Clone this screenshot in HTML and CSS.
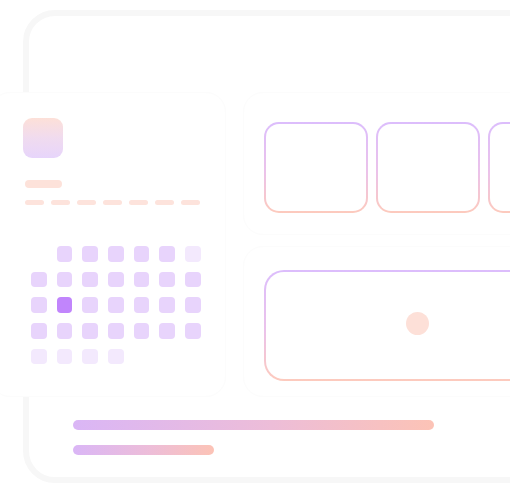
FILE: index.html
```html
<!DOCTYPE html>
<html>
<head>
<meta charset="utf-8">
<link rel="stylesheet" href="styles.css">
</head>
<body>
<div class="stage">
  <div class="back">
    <div class="bars">
      <div class="bar bar-long"></div>
      <div class="bar bar-short"></div>
    </div>
  </div>
  <div class="front">
    <div class="panel left">
      <div class="avatar"></div>
      <div class="pill"></div>
      <div class="dashes">
        <span></span><span></span><span></span><span></span><span></span><span></span><span></span>
      </div>
      <div class="grid">
        <i class="empty"></i><i></i><i></i><i></i><i></i><i></i><i class="faint"></i>
        <i></i><i></i><i></i><i></i><i></i><i></i><i></i>
        <i></i><i class="active"></i><i></i><i></i><i></i><i></i><i></i>
        <i></i><i></i><i></i><i></i><i></i><i></i><i></i>
        <i class="faint"></i><i class="faint"></i><i class="faint"></i><i class="faint"></i>
      </div>
    </div>
    <div class="right">
      <div class="panel top">
        <div class="tile"></div>
        <div class="tile"></div>
        <div class="tile"></div>
      </div>
      <div class="panel bottom">
        <div class="wide"><div class="dot"></div></div>
      </div>
    </div>
  </div>
</div>
</body>
</html>
```
FILE: styles.css
```css
html, body {
  margin: 0;
  padding: 0;
  background: #ffffff;
}
.stage {
  position: relative;
  width: 510px;
  height: 492px;
  overflow: hidden;
  background: #ffffff;
}
.back {
  position: absolute;
  left: 23px;
  top: 10px;
  width: 560px;
  height: 473px;
  box-sizing: border-box;
  border: 6px solid #f7f7f7;
  border-radius: 32px;
  background: #ffffff;
  display: flex;
  flex-direction: column;
  justify-content: flex-end;
  padding: 0 0 22px 44px;
}
.bars {
  display: flex;
  flex-direction: column;
  gap: 15px;
}
.bar {
  height: 10px;
  border-radius: 5px;
  background: linear-gradient(90deg, #dab6f6 0%, #edbdd8 55%, #fcc3b6 100%);
}
.bar-long { width: 361px; }
.bar-short { width: 141px; }

.front {
  position: absolute;
  left: -10px;
  top: 92px;
  height: 305px;
  display: flex;
  gap: 17px;
}
.panel {
  background: #ffffff;
  border: 1px solid #fcfcfc;
  border-radius: 20px;
  box-sizing: border-box;
}
.left {
  width: 236px;
  height: 305px;
  padding: 25px 0 0 32px;
  display: flex;
  flex-direction: column;
  align-items: flex-start;
}
.avatar {
  width: 40px;
  height: 40px;
  border-radius: 9px;
  background: linear-gradient(180deg, #fde0d8 0%, #f0dbef 50%, #e7d5fb 100%);
}
.pill {
  margin: 22px 0 0 2px;
  width: 37px;
  height: 8px;
  border-radius: 4px;
  background: #fde2da;
}
.dashes {
  margin: 12px 0 0 2px;
  display: flex;
  gap: 7px;
}
.dashes span {
  width: 19px;
  height: 5px;
  border-radius: 3px;
  background: #fde3dc;
}
.grid {
  margin: 41px 0 0 8px;
  display: grid;
  grid-template-columns: repeat(7, 15.5px);
  grid-auto-rows: 15.5px;
  gap: 10.2px;
}
.grid i {
  display: block;
  border-radius: 4px;
  background: #e8d4fc;
}
.grid i.empty { background: transparent; }
.grid i.faint { background: #f3e9fd; }
.grid i.active { background: #c185fc; }

.right {
  display: flex;
  flex-direction: column;
  gap: 11px;
}
.top {
  width: 320px;
  height: 143px;
  padding: 29px 0 0 20px;
  display: flex;
  gap: 8px;
}
.tile {
  flex: none;
  width: 104px;
  height: 91px;
  box-sizing: border-box;
  border: 2px solid transparent;
  border-radius: 15px;
  background:
    linear-gradient(#ffffff, #ffffff) padding-box,
    linear-gradient(180deg, #dcbdfc 0%, #ebc2ea 55%, #fdcabd 100%) border-box;
}
.bottom {
  width: 320px;
  height: 151px;
  padding: 23px 0 0 20px;
}
.wide {
  width: 306px;
  height: 111px;
  box-sizing: border-box;
  border: 2px solid transparent;
  border-radius: 20px;
  background:
    linear-gradient(#ffffff, #ffffff) padding-box,
    linear-gradient(180deg, #dcbdfc 0%, #ebc2ea 55%, #fdcabd 100%) border-box;
  display: flex;
  align-items: center;
  justify-content: center;
}
.dot {
  width: 23px;
  height: 23px;
  margin-bottom: 4px;
  border-radius: 50%;
  background: #fde0d8;
}
```
